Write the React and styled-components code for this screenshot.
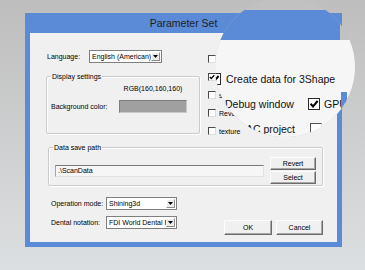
import React from "react";
import styled, { createGlobalStyle } from "styled-components";

const GlobalStyle = createGlobalStyle`
  html, body {
    margin: 0;
    padding: 0;
  }
  body {
    background: #c9cacb;
    font-family: "Liberation Sans", Arial, sans-serif;
  }
`;

const BLUE = "#5b8ad6";

const Page = styled.div`
  position: relative;
  width: 365px;
  height: 270px;
  overflow: hidden;
  box-sizing: border-box;
  padding: 13px 0 0 25px;
  background: linear-gradient(180deg, #bebebe 0%, #cfd0d1 55%, #dcdfe1 100%);
`;

const Dialog = styled.div`
  width: 317px;
  height: 234px;
  box-sizing: border-box;
  padding: 0 5px 5px;
  background: ${BLUE};
  display: flex;
  flex-direction: column;
`;

const TitleBar = styled.div`
  height: 20px;
  display: flex;
  align-items: center;
  justify-content: center;
  font-size: 10.5px;
  color: #1e1e1e;
`;

const Client = styled.div`
  flex: 1;
  background: #f0f0f0;
  padding: 17px 14px 0 16px;
  display: flex;
  flex-direction: column;
  font-size: 7px;
  line-height: 9px;
  color: #000;
`;

const TopGrid = styled.div`
  display: grid;
  grid-template-columns: 154px 1fr;
  column-gap: 8px;
`;

const LeftCol = styled.div`
  display: flex;
  flex-direction: column;
`;

const LangRow = styled.div`
  display: flex;
  align-items: center;
  height: 13px;
  padding-left: 1px;
`;

const Label = styled.span`
  width: ${(p) => p.$w}px;
  flex-shrink: 0;
  white-space: nowrap;
`;

const Select = styled.div`
  width: ${(p) => p.$w}px;
  height: 13px;
  box-sizing: border-box;
  border: 1px solid #7f7f7f;
  background: #fff;
  display: flex;
  align-items: center;
`;

const SelectText = styled.span`
  flex: 1;
  padding-left: 2px;
  overflow: hidden;
  white-space: nowrap;
`;

const ArrowBtn = styled.span`
  width: 9px;
  height: 9px;
  margin-right: 1px;
  box-sizing: border-box;
  border: 1px solid;
  border-color: #fff #8c8c8c #8c8c8c #fff;
  background: #ececec;
  display: flex;
  align-items: center;
  justify-content: center;
`;

const GroupBox = styled.div`
  position: relative;
  box-sizing: border-box;
  border: 1px solid #cbcbcb;
  border-radius: 2px;
  box-shadow: inset 1px 1px 0 #fff, 1px 1px 0 #fff;
`;

const GroupLabel = styled.span`
  position: absolute;
  top: -5px;
  left: 4px;
  padding: 0 1px;
  background: #f0f0f0;
  line-height: 9px;
  white-space: nowrap;
`;

const DisplayGroup = styled(GroupBox)`
  margin-top: 13px;
  width: 154px;
  height: 58px;
  padding: 7px 4px 0;
`;

const ColorGrid = styled.div`
  display: grid;
  grid-template-columns: 68px 68px;
  row-gap: 7px;
  align-items: center;
`;

const RgbText = styled.span`
  text-align: center;
  white-space: nowrap;
`;

const Swatch = styled.div`
  height: 13px;
  box-sizing: border-box;
  border: 1px solid;
  border-color: #7d7d7d #c8c8c8 #c8c8c8 #7d7d7d;
  background: #a0a0a0;
`;

const CheckCol = styled.div`
  display: flex;
  flex-direction: column;
  padding-top: 5px;
  gap: 10px;
`;

const CheckRow = styled.div`
  display: flex;
  align-items: center;
  height: 8px;
  gap: 3px;
  white-space: nowrap;
`;

const SmallBox = styled.span`
  width: 8px;
  height: 8px;
  box-sizing: border-box;
  border: 1px solid;
  border-color: #4a4a4a #dcdcdc #dcdcdc #4a4a4a;
  background: #fff;
  display: flex;
  flex-shrink: 0;
`;

const DataGroup = styled(GroupBox)`
  margin: 12px 0 0 2px;
  width: 275px;
  padding: 9px 6px 1px;
  display: flex;
  align-items: center;
`;

const PathInput = styled.div`
  width: 210px;
  height: 12px;
  box-sizing: border-box;
  border: 1px solid;
  border-color: #7a7a7a #e2e2e2 #e2e2e2 #a5a5a5;
  background: #f6f6f6;
  padding-left: 2px;
  display: flex;
  align-items: center;
`;

const ButtonCol = styled.div`
  margin-left: 6px;
  display: flex;
  flex-direction: column;
  gap: 1px;
`;

const Button = styled.div`
  width: ${(p) => p.$w}px;
  height: ${(p) => p.$h}px;
  box-sizing: border-box;
  border: 1px solid;
  border-color: #fdfdfd #6b6b6b #6b6b6b #fdfdfd;
  box-shadow: inset -1px -1px 0 #a8a8a8;
  background: #f0f0f0;
  display: flex;
  align-items: center;
  justify-content: center;
`;

const Bottom = styled.div`
  display: flex;
  align-items: flex-start;
  margin-top: 11px;
  padding-left: 5px;
`;

const FormCol = styled.div`
  display: flex;
  flex-direction: column;
  gap: 6px;
`;

const FormRow = styled.div`
  display: flex;
  align-items: center;
  height: 13px;
`;

const DialogButtons = styled.div`
  margin-left: auto;
  margin-top: 23px;
  display: flex;
  gap: 4px;
`;

/* magnifier lens over the top-right corner */
const Lens = styled.div`
  position: absolute;
  left: 215px;
  top: -3px;
  width: 140px;
  height: 140px;
  border-radius: 50%;
  overflow: hidden;
  background: #c1c1c1;
  display: flex;
  flex-direction: column;
`;

const MagTitle = styled.div`
  position: relative;
  margin-top: 13px;
  width: 125px;
  height: 30px;
  flex-shrink: 0;
  background: ${BLUE};
`;

const RedCorner = styled.span`
  position: absolute;
  top: 3px;
  right: 2px;
  width: 8px;
  height: 7px;
  background: #d8463c;
  clip-path: polygon(0 0, 100% 0, 100% 100%);
`;

const MagBody = styled.div`
  position: relative;
  flex: 1;
  background: #f6f6f6;
  padding-top: 32px;
  display: flex;
  flex-direction: column;
  gap: 11px;
  font-size: 10.5px;
  line-height: 14px;
  color: #111;
`;

const MagRow = styled.div`
  display: flex;
  align-items: center;
  height: 14px;
  padding-left: ${(p) => p.$pad}px;
  white-space: nowrap;
`;

const MagLabel = styled.span`
  width: ${(p) => p.$w}px;
  flex-shrink: 0;
`;

const BigBox = styled.span`
  width: 12px;
  height: 12px;
  box-sizing: border-box;
  border: 1px solid;
  border-color: ${(p) => (p.$faint ? "#555 #d8d8d8 #d8d8d8 #555" : "#2a2a2a")};
  background: #fff;
  display: flex;
  flex-shrink: 0;
  margin-left: ${(p) => p.$ml || 0}px;
  margin-right: ${(p) => p.$mr || 0}px;
`;

const MagBorder = styled.span`
  position: absolute;
  left: 126px;
  top: 52px;
  bottom: 0;
  width: 6px;
  background: ${BLUE};
`;

const Arrow = () => (
  <svg width="5" height="3" viewBox="0 0 5 3">
    <polygon points="0,0 5,0 2.5,3" fill="#000" />
  </svg>
);

const SmallCheck = () => (
  <svg width="6" height="6" viewBox="0 0 6 6">
    <path d="M0.8 3 L2.3 4.5 L5.2 1.2" stroke="#000" strokeWidth="1.3" fill="none" />
  </svg>
);

const BigCheck = () => (
  <svg width="10" height="10" viewBox="0 0 10 10">
    <path d="M1.6 4.8 L4 7.4 L8.6 2" stroke="#000" strokeWidth="2" fill="none" />
  </svg>
);

const DropDown = ({ w, value }) => (
  <Select $w={w}>
    <SelectText>{value}</SelectText>
    <ArrowBtn>
      <Arrow />
    </ArrowBtn>
  </Select>
);

const options = [
  { label: "smooth data", checked: false },
  { label: "Create data for 3Shape", checked: true },
  { label: "save mesh", checked: false },
  { label: "Reverse normal", checked: false },
  { label: "texture", checked: false },
];

const App = () => {
  return (
    <Page>
      <GlobalStyle />
      <Dialog>
        <TitleBar>Parameter Set</TitleBar>
        <Client>
          <TopGrid>
            <LeftCol>
              <LangRow>
                <Label $w={42}>Language:</Label>
                <DropDown w={73} value="English (American)" />
              </LangRow>
              <DisplayGroup>
                <GroupLabel>Display settings</GroupLabel>
                <ColorGrid>
                  <span />
                  <RgbText>RGB(160,160,160)</RgbText>
                  <Label>Background color:</Label>
                  <Swatch />
                </ColorGrid>
              </DisplayGroup>
            </LeftCol>
            <CheckCol>
              {options.map((o) => (
                <CheckRow key={o.label}>
                  <SmallBox>{o.checked && <SmallCheck />}</SmallBox>
                  <span>{o.label}</span>
                </CheckRow>
              ))}
            </CheckCol>
          </TopGrid>

          <DataGroup>
            <GroupLabel>Data save path</GroupLabel>
            <PathInput>.\ScanData</PathInput>
            <ButtonCol>
              <Button $w={46} $h={13}>Revert</Button>
              <Button $w={46} $h={13}>Select</Button>
            </ButtonCol>
          </DataGroup>

          <Bottom>
            <FormCol>
              <FormRow>
                <Label $w={55}>Operation mode:</Label>
                <DropDown w={71} value="Shining3d" />
              </FormRow>
              <FormRow>
                <Label $w={55}>Dental notation:</Label>
                <DropDown w={71} value="FDI World Dental Federation" />
              </FormRow>
            </FormCol>
            <DialogButtons>
              <Button $w={48} $h={15}>OK</Button>
              <Button $w={47} $h={15}>Cancel</Button>
            </DialogButtons>
          </Bottom>
        </Client>
      </Dialog>

      <Lens>
        <MagTitle>
          <RedCorner />
        </MagTitle>
        <MagBody>
          <MagBorder />
          <MagRow $pad={0}>
            <BigBox $ml={-6} $mr={5}>
              <BigCheck />
            </BigBox>
            <span>Create data for 3Shape</span>
          </MagRow>
          <MagRow $pad={10}>
            <MagLabel $w={83}>Debug window</MagLabel>
            <BigBox $mr={4}>
              <BigCheck />
            </BigBox>
            <span>GPU</span>
          </MagRow>
          <MagRow $pad={31}>
            <MagLabel $w={64}>AC project</MagLabel>
            <BigBox $faint />
          </MagRow>
        </MagBody>
      </Lens>
    </Page>
  );
};

export default App;
